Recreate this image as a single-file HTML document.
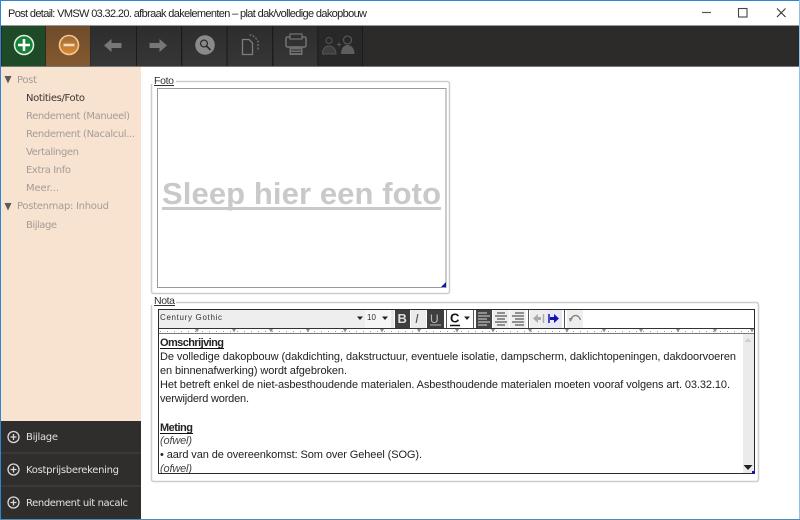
<!DOCTYPE html>
<html><head><meta charset="utf-8"><title>Post detail</title>
<style>
html,body{margin:0;padding:0;width:800px;height:520px;overflow:hidden;background:#fff}
svg{display:block}
text{font-family:"Liberation Sans",sans-serif}
.side{font-family:"DejaVu Sans",sans-serif;font-size:10px;fill:#a39d97}
.pan{font-family:"DejaVu Sans",sans-serif;font-size:10px;fill:#e2e2e2}
.body{font-size:11px;fill:#222}
</style></head><body>
<svg width="800" height="520" viewBox="0 0 800 520" xmlns="http://www.w3.org/2000/svg">
<defs>
<linearGradient id="btn" x1="0" y1="0" x2="0" y2="1"><stop offset="0" stop-color="#2d2d2d"/><stop offset="1" stop-color="#363636"/></linearGradient>
<linearGradient id="or" x1="0" y1="0" x2="0" y2="1"><stop offset="0" stop-color="#6f4b2b"/><stop offset="1" stop-color="#83592f"/></linearGradient>
<linearGradient id="orc" x1="0" y1="0" x2="0" y2="1"><stop offset="0" stop-color="#9a6a35"/><stop offset="1" stop-color="#e08a30"/></linearGradient>
</defs>
<rect width="800" height="520" fill="#fff"/>

<!-- title bar -->
<text x="8" y="17" font-size="11" fill="#222" textLength="359" lengthAdjust="spacing">Post detail: VMSW 03.32.20. afbraak dakelementen – plat dak/volledige dakopbouw</text>
<path d="M702 12.500h9" stroke="#555" stroke-width="1.200"/>
<rect x="738.500" y="8.500" width="8.500" height="8.500" fill="none" stroke="#444" stroke-width="1.100"/>
<path d="M777 8.500l8.500 8.500M785.500 8.500l-8.500 8.500" stroke="#333" stroke-width="1.100"/>

<!-- toolbar -->
<rect x="0" y="25" width="800" height="1" fill="#999"/>
<rect x="0" y="26" width="800" height="40" fill="#2c2b2a"/>
<rect x="0" y="66" width="800" height="1" fill="#777"/>
<rect x="2" y="26" width="43" height="40" fill="#1f4a27"/>
<rect x="46" y="26" width="44" height="40" fill="url(#or)"/>
<rect x="91" y="26" width="45" height="40" fill="url(#btn)"/>
<rect x="137" y="26" width="44" height="40" fill="url(#btn)"/>
<rect x="183" y="26" width="44" height="40" fill="url(#btn)"/>
<rect x="228" y="26" width="44" height="40" fill="url(#btn)"/>
<rect x="274" y="26" width="43" height="40" fill="url(#btn)"/>
<rect x="319" y="26" width="43" height="40" fill="#282828"/>
<path d="M136.500 26v40M181.500 26v40M227 26v40M272.500 26v40M318 26v40M362.500 26v40" stroke="#1b1b1b" stroke-width="1"/>

<!-- add -->
<circle cx="24" cy="45" r="9.500" fill="#17813a" stroke="#dff3e2" stroke-width="1.500"/>
<path d="M24 39v12M18 45h12" stroke="#fff" stroke-width="2.600"/>
<!-- minus -->
<circle cx="69" cy="45" r="9.500" fill="url(#orc)" stroke="#f4c899" stroke-width="1.600"/>
<path d="M63.500 45h11" stroke="#f7dcc0" stroke-width="2.600"/>
<!-- arrows -->
<path d="M104 45.500l7.500-6.500v4h10v5h-10v4z" fill="#777"/>
<path d="M167 45.500l-7.500-6.500v4h-10v5h10v4z" fill="#777"/>
<!-- search -->
<circle cx="205" cy="45" r="9.800" fill="#8a8a8a"/>
<circle cx="204" cy="43.500" r="3.400" fill="none" stroke="#2c2c2c" stroke-width="1.300"/>
<path d="M206.500 46l4 4" stroke="#2c2c2c" stroke-width="1.600"/>
<!-- docs -->
<path d="M242.500 39.500h6.500l3.500 3.500v11.500h-10z" fill="none" stroke="#7d7d7d" stroke-width="1.300"/>
<path d="M249.500 35h2.500l3.500 3 2.500 3v10" fill="none" stroke="#777" stroke-width="1.300" stroke-dasharray="2 1.500"/>
<!-- printer -->
<rect x="286" y="37" width="20" height="10" rx="1.500" fill="none" stroke="#757575" stroke-width="1.500"/>
<rect x="290" y="34" width="12" height="5" fill="#2f2f2f" stroke="#757575" stroke-width="1.200"/>
<rect x="289.500" y="47" width="13" height="8" fill="#6f6f6f"/>
<path d="M291 50h10M291 52.500h10" stroke="#2f2f2f"/>
<!-- people -->
<circle cx="329" cy="40.500" r="3" fill="none" stroke="#555" stroke-width="1"/>
<path d="M322.500 54c0-5.500 3-8 6.500-8s7 2.500 7 8z" fill="#3f3f3f" stroke="#555"/>
<path d="M337 44.500h4M339 42.500v4" stroke="#5a5a5a"/>
<circle cx="347.500" cy="40" r="4" fill="none" stroke="#5e5e5e" stroke-width="1.100"/>
<path d="M341 54c0-6 3-9 6.500-9s7 3 7 9z" fill="#5e5e5e"/>

<!-- sidebar -->
<rect x="1" y="67" width="140" height="354" fill="#f8e2d0"/>
<path d="M4.500 76h7l-3.500 7.500z" fill="#5a5a5a"/>
<path d="M4.500 203h7l-3.500 7.500z" fill="#5a5a5a"/>
<text class="side" x="17" y="83" textLength="20" lengthAdjust="spacing">Post</text>
<text class="side" x="26" y="101" textLength="59" lengthAdjust="spacing" style="fill:#3a3633">Notities/Foto</text>
<text class="side" x="26" y="119" textLength="104" lengthAdjust="spacing">Rendement (Manueel)</text>
<text class="side" x="26" y="137" textLength="109" lengthAdjust="spacing">Rendement (Nacalcul...</text>
<text class="side" x="26" y="155" textLength="53" lengthAdjust="spacing">Vertalingen</text>
<text class="side" x="26" y="173" textLength="45" lengthAdjust="spacing">Extra Info</text>
<text class="side" x="26" y="191" textLength="33" lengthAdjust="spacing">Meer...</text>
<text class="side" x="17" y="209" textLength="92" lengthAdjust="spacing">Postenmap: Inhoud</text>
<text class="side" x="26" y="228" textLength="31" lengthAdjust="spacing">Bijlage</text>

<!-- bottom panels -->
<rect x="1" y="421" width="140" height="98" fill="#2f2e2d"/>
<path d="M1 453h140M1 486h140" stroke="#454443" stroke-width="1"/>
<g fill="none" stroke="#d9d9d9" stroke-width="1.300">
<circle cx="13.500" cy="437" r="5.500"/><path d="M13.500 434v6M10.500 437h6"/>
<circle cx="13.500" cy="469.500" r="5.500"/><path d="M13.500 466.500v6M10.500 469.500h6"/>
<circle cx="13.500" cy="502.500" r="5.500"/><path d="M13.500 499.500v6M10.500 502.500h6"/>
</g>
<text class="pan" x="26" y="440" textLength="32" lengthAdjust="spacing">Bijlage</text>
<text class="pan" x="26" y="473" textLength="93" lengthAdjust="spacing">Kostprijsberekening</text>
<text class="pan" x="26" y="506" textLength="102" lengthAdjust="spacing">Rendement uit nacalc</text>

<!-- Foto group -->
<rect x="151.500" y="81.500" width="298" height="212" rx="2" fill="#fff" stroke="#cdcdcd" stroke-width="1.500"/>
<rect x="147" y="74" width="29" height="10" fill="#fff"/>
<text x="154" y="84" font-size="10.500" fill="#333" textLength="20" lengthAdjust="spacing">Foto</text>
<path d="M154 85.500h20" stroke="#333"/>
<rect x="157.500" y="88.500" width="288.500" height="199" fill="#fff" stroke="#999"/>
<text x="162" y="204" font-size="31" font-weight="bold" fill="#c9c9c9" textLength="279" lengthAdjust="spacing">Sleep hier een foto</text>
<rect x="162" y="207" width="279" height="3" fill="#c9c9c9"/>
<path d="M446 282v5h-5z" fill="#1414b4"/>

<!-- Nota group -->
<rect x="151.500" y="302.500" width="607" height="179" rx="2" fill="#fff" stroke="#cdcdcd" stroke-width="1.500"/>
<rect x="147" y="295" width="29" height="10" fill="#fff"/>
<text x="154" y="304" font-size="10.500" fill="#333" textLength="21" lengthAdjust="spacing">Nota</text>
<path d="M154 305.500h21" stroke="#333"/>

<!-- editor -->
<rect x="158" y="309" width="597" height="165" fill="#fff"/>
<rect x="159" y="310" width="206" height="18" fill="#eeeeee"/>
<text x="160" y="320" font-size="8" fill="#333" textLength="62" lengthAdjust="spacing">Century Gothic</text>
<path d="M357 316.500h6l-3 3.500z" fill="#222"/>
<rect x="365" y="310" width="26" height="18" fill="#f6f6f6"/>
<text x="367" y="320" font-size="8" fill="#333">10</text>
<path d="M382 316.500h6l-3 3.500z" fill="#222"/>
<rect x="391" y="310" width="3" height="18" fill="#e8e8e8"/>
<rect x="395" y="310" width="15" height="18" fill="#3e3e3e"/>
<text x="397.500" y="323" font-size="13" font-weight="bold" fill="#ddd">B</text>
<rect x="411" y="310" width="15" height="18" fill="#ebebeb"/>
<text x="415" y="323" font-size="13" font-style="italic" fill="#555">I</text>
<rect x="427" y="310" width="17" height="18" fill="#3e3e3e"/>
<text x="430" y="323" font-size="12" fill="#bbb">U</text>
<path d="M430 325h11" stroke="#bbb"/>
<path d="M446.500 310v18" stroke="#555"/>
<text x="450" y="322.500" font-size="13" font-weight="bold" fill="#111">C</text>
<path d="M450 325.500h10" stroke="#111" stroke-width="1.500"/>
<path d="M464 316.500h6l-3 3.500z" fill="#222"/>
<path d="M473.500 310v18" stroke="#555"/>
<rect x="476" y="310" width="16" height="18" fill="#444"/>
<path d="M478 313h9M478 316h12M478 319h9M478 322h12M478 325h9" stroke="#ddd" stroke-width=".9"/>
<rect x="493" y="310" width="16" height="18" fill="#eee"/>
<path d="M497 313h8M495 316h12M497 319h8M495 322h12M497 325h8" stroke="#333" stroke-width=".9"/>
<rect x="510" y="310" width="16" height="18" fill="#eee"/>
<path d="M515 313h9M512 316h12M515 319h9M512 322h12M515 325h9" stroke="#333" stroke-width=".9"/>
<path d="M528.500 310v18" stroke="#555"/>
<rect x="530" y="310" width="16" height="18" fill="#eee"/>
<path d="M533 318.500l5-4.500v3h3v3h-3v3z" fill="#aaa"/><path d="M543.500 314v9" stroke="#aaa" stroke-width="1.500"/>
<rect x="546" y="310" width="16" height="18" fill="#e8e8f4"/>
<path d="M559 318.500l-5-4.500v3h-4v3h4v3z" fill="#1212b0"/><path d="M549 314v9" stroke="#1212b0" stroke-width="1.500"/>
<path d="M564.500 310v18" stroke="#555"/>
<rect x="567" y="310" width="16" height="18" fill="#eee"/>
<path d="M570.500 321c1-4 3-5.500 5-5.500s4 1.500 5 4.500" fill="none" stroke="#888" stroke-width="1.400"/><path d="M569 318l4 0-3 4z" fill="#888"/>
<rect x="583" y="310" width="171" height="18" fill="#fff"/>
<rect x="158.500" y="309.500" width="596" height="164" fill="none" stroke="#2a2a2a"/>
<path d="M158 328.500h597" stroke="#333"/>
<!-- ruler -->
<rect x="159" y="329" width="595" height="4" fill="#fff"/>
<path d="M159 333.500h595" stroke="#777"/>
<path d="M160 331.500H754" stroke="#999" stroke-dasharray="1 6"/>
<g fill="#8f8f8f">
<path d="M195 329h4l-2 3.500zM232 329h4l-2 3.500zM269 329h4l-2 3.500zM306 329h4l-2 3.500zM343 329h4l-2 3.500zM380 329h4l-2 3.500zM417 329h4l-2 3.500zM455 329h4l-2 3.500zM491 329h4l-2 3.500zM528 329h4l-2 3.500zM565 329h4l-2 3.500zM602 329h4l-2 3.500zM639 329h4l-2 3.500zM676 329h4l-2 3.500zM713 329h4l-2 3.500zM750 329h4l-2 3.500z"/>
</g>

<!-- body text -->
<text class="body" x="160" y="346" font-weight="bold" textLength="64" lengthAdjust="spacing">Omschrijving</text>
<path d="M160 348.500h64" stroke="#111" stroke-width="1"/>
<text class="body" x="160" y="360" textLength="576" lengthAdjust="spacing">De volledige dakopbouw (dakdichting, dakstructuur, eventuele isolatie, dampscherm, daklichtopeningen, dakdoorvoeren</text>
<text class="body" x="160" y="374" textLength="187" lengthAdjust="spacing">en binnenafwerking) wordt afgebroken.</text>
<text class="body" x="160" y="388" textLength="570" lengthAdjust="spacing">Het betreft enkel de niet-asbesthoudende materialen. Asbesthoudende materialen moeten vooraf volgens art. 03.32.10.</text>
<text class="body" x="160" y="402" textLength="89" lengthAdjust="spacing">verwijderd worden.</text>
<text class="body" x="160" y="431" font-weight="bold" textLength="33" lengthAdjust="spacing">Meting</text>
<path d="M160 433.500h33" stroke="#111" stroke-width="1"/>
<text class="body" x="160" y="444" font-style="italic" style="fill:#444" textLength="32" lengthAdjust="spacing">(ofwel)</text>
<text class="body" x="160" y="458" textLength="262" lengthAdjust="spacing">• aard van de overeenkomst: Som over Geheel (SOG).</text>
<svg x="159" y="460" width="500" height="13"><text class="body" x="1" y="12" font-style="italic" style="fill:#444" textLength="32" lengthAdjust="spacing">(ofwel)</text></svg>

<!-- scrollbar -->
<rect x="743" y="334" width="11" height="139" fill="#ebebeb"/>
<path d="M744.500 342l3.500-4 3.500 4z" fill="#cfcfcf"/>
<path d="M743.500 465h9l-4.500 5z" fill="#222"/>
<rect x="752" y="471" width="3" height="3" fill="#1414b4"/>

<!-- window border -->
<rect x="0" y="0" width="800" height="1" fill="#2f86cf"/>
<rect x="0" y="0" width="1" height="520" fill="#2f86cf"/>
<rect x="799" y="0" width="1" height="520" fill="#8fc2ea"/>
<rect x="0" y="519" width="800" height="1" fill="#4f8db8"/>
</svg>
</body></html>
